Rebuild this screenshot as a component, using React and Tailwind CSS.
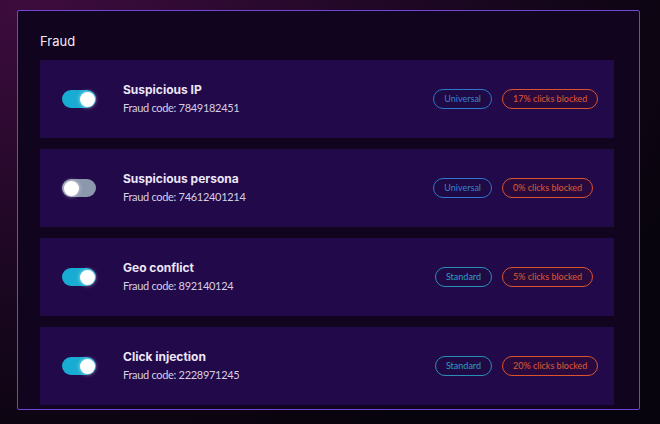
import { useState } from 'react';

const rules = [
  { name: 'Suspicious IP', code: '7849182451', on: true, scope: 'Universal', blocked: '17%' },
  { name: 'Suspicious persona', code: '74612401214', on: false, scope: 'Universal', blocked: '0%' },
  { name: 'Geo conflict', code: '892140124', on: true, scope: 'Standard', blocked: '5%' },
  { name: 'Click injection', code: '2228971245', on: true, scope: 'Standard', blocked: '20%' },
];

const Toggle = ({ on, onClick }) => (
  <button
    onClick={onClick}
    className={`relative w-[34px] h-[18px] rounded-full shrink-0 ${on ? 'bg-[#18acd2]' : 'bg-[#8c97ad]'}`}
  >
    <span
      className={`absolute top-[1.5px] w-[15px] h-[15px] rounded-full bg-white shadow-[0_0_4px_rgba(255,255,255,0.7)] ${on ? 'left-[17.5px]' : 'left-[1.5px]'}`}
    />
  </button>
);

const RuleCard = ({ rule, onToggle }) => (
  <div className="h-[78px] shrink-0 flex items-center bg-[#22094a] pl-[22px] pr-[10px]">
    <Toggle on={rule.on} onClick={onToggle} />
    <div className="ml-[27px] flex flex-col">
      <span className="text-[12px] leading-[18px] font-bold text-[#ece6f5]">{rule.name}</span>
      <span className="text-[11px] leading-[18px] tracking-[-0.3px] text-[#d6cfe4] font-['Lato']">Fraud code: {rule.code}</span>
    </div>
    <div className="ml-auto flex items-center gap-[10px] font-['Lato'] text-[9px]">
      <div className="w-[60px] flex justify-end">
        <span
          className={`h-[20px] px-[10px] flex items-center rounded-full border bg-[#1f0a46] ${
            rule.scope === 'Universal'
              ? 'border-[#2b78cc] text-[#3a82d0]'
              : 'border-[#2a8fb8] text-[#2f9ec0]'
          }`}
        >
          {rule.scope}
        </span>
      </div>
      <div className="w-[102px] flex">
        <span className="h-[20px] px-[10px] flex items-center rounded-full border border-[#d9532f] bg-[#2a0a3e] text-[#de5a36]">
          {rule.blocked} clicks blocked
        </span>
      </div>
    </div>
  </div>
);

export default function App() {
  const [list, setList] = useState(rules);

  const toggle = (i) =>
    setList(prev => prev.map((r, idx) => (idx === i ? { ...r, on: !r.on } : r)));

  return (
    <div
      className="w-[660px] h-[424px] overflow-hidden pl-[17px] pt-[10px] bg-[#08040d] bg-[radial-gradient(ellipse_at_5%_0%,#3d0c3e_0%,#1c0722_45%,transparent_80%)]"
      style={{ fontFamily: 'Inter, "Noto Sans", sans-serif' }}
    >
      <div className="w-[623px] h-[400px] overflow-hidden border border-[#7046d6] rounded-[2px] bg-[#11041f] pl-[22px] pr-[25px] pt-[22px]">
        <h2 className="text-[13px] leading-[16px] text-[#f1ecf8] mb-[11px]">Fraud</h2>
        <div className="flex flex-col gap-[11px]">
          {list.map((r, i) => (
            <RuleCard key={r.name} rule={r} onToggle={() => toggle(i)} />
          ))}
        </div>
      </div>
    </div>
  );
}
